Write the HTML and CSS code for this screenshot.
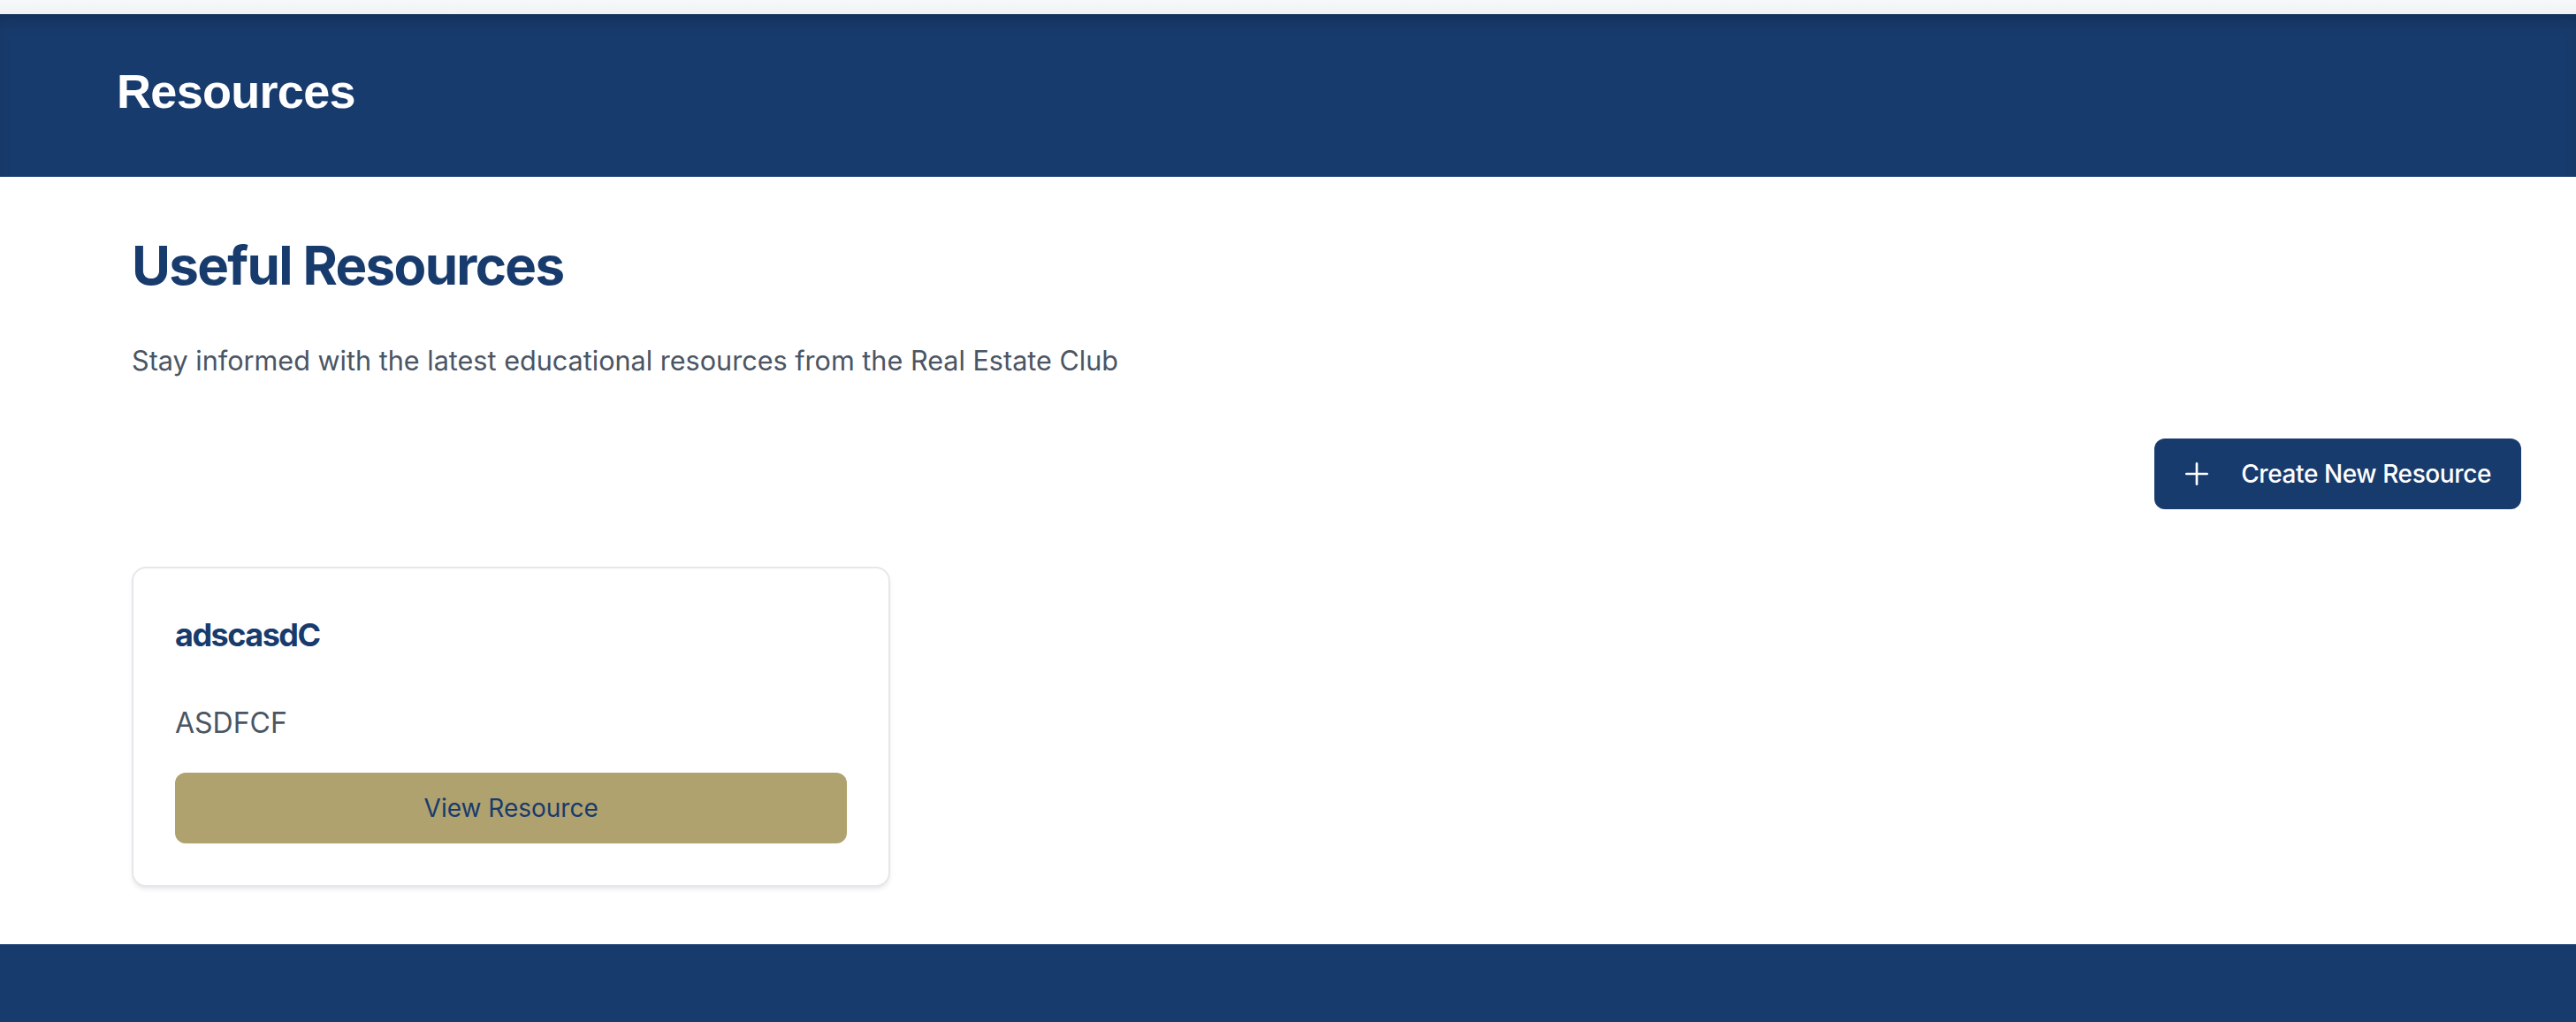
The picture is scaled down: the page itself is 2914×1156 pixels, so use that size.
FILE: index.html
```html
<!DOCTYPE html>
<html lang="en">
<head>
<meta charset="utf-8">
<title>Resources</title>
<link rel="stylesheet" href="styles.css">
</head>
<body>
  <div class="topbar"></div>
  <header class="hero">
    <h1 class="hero-title">Resources</h1>
  </header>
  <main class="main">
    <h2 class="page-title">Useful Resources</h2>
    <p class="page-sub">Stay informed with the latest educational resources from the Real Estate Club</p>
    <div class="actions">
      <button class="btn-create" type="button">
        <svg class="plus" viewBox="0 0 24 24" width="40" height="40" fill="none" stroke="currentColor" stroke-width="1.6" stroke-linecap="round"><path d="M12 5v14M5 12h14"/></svg>
        <span>Create New Resource</span>
      </button>
    </div>
    <div class="grid">
      <article class="card">
        <h3 class="card-title">adscasdC</h3>
        <p class="card-desc">ASDFCF</p>
        <button class="btn-view" type="button">View Resource</button>
      </article>
    </div>
  </main>
  <footer class="footer"></footer>
</body>
</html>
```
FILE: styles.css
```css
* { box-sizing: border-box; }
html, body { margin: 0; padding: 0; }
body {
  background: #ffffff;
  font-family: Inter, "Noto Sans", sans-serif;
  overflow: hidden;
}
.topbar {
  height: 16px;
  background: linear-gradient(#f7f8fa, #f1f2f5);
}
.hero {
  background: #183b6d;
  height: 184px;
  padding: 57px 0 0 132px;
  box-shadow: inset 0 14px 22px -14px rgba(0, 0, 0, 0.35);
}
.hero-title {
  margin: 0;
  font-family: "Liberation Sans", Arial, sans-serif;
  font-weight: 700;
  font-size: 54px;
  line-height: 60px;
  letter-spacing: -0.7px;
  color: #ffffff;
}
.main {
  padding: 64px 62px 65px 149px;
}
.page-title {
  margin: 0;
  font-size: 60px;
  line-height: 72px;
  font-weight: 700;
  letter-spacing: -1.65px;
  color: #183b6d;
}
.page-sub {
  margin: 48px 0 0;
  font-size: 30.6px;
  line-height: 48px;
  color: #4b5563;
}
.actions {
  display: flex;
  justify-content: flex-end;
  margin-top: 64px;
}
.btn-create {
  display: flex;
  align-items: center;
  gap: 30px;
  height: 80px;
  padding: 0 34px 0 28px;
  border: 0;
  border-radius: 12px;
  background: #183b6d;
  color: #ffffff;
  font-family: Inter, "Noto Sans", sans-serif;
  font-size: 28px;
  font-weight: 500;
  line-height: 40px;
  letter-spacing: -0.4px;
}
.plus { display: block; flex: none; }
.grid {
  display: grid;
  grid-template-columns: repeat(3, 1fr);
  gap: 64px;
  margin-top: 65px;
}
.card {
  border: 2px solid #e5e7eb;
  border-radius: 16px;
  background: #ffffff;
  padding: 47px;
  box-shadow: 0 4px 6px -1px rgba(0, 0, 0, 0.08), 0 2px 4px -2px rgba(0, 0, 0, 0.06);
}
.card-title {
  margin: 0;
  font-size: 36px;
  line-height: 56px;
  font-weight: 700;
  letter-spacing: -1.5px;
  color: #183b6d;
}
.card-desc {
  margin: 48px 0 0;
  font-size: 32px;
  line-height: 48px;
  color: #4b5563;
}
.btn-view {
  display: block;
  width: 100%;
  margin-top: 32px;
  height: 80px;
  border: 0;
  border-radius: 12px;
  background: #afa26e;
  color: #183b6d;
  font-family: Inter, "Noto Sans", sans-serif;
  font-size: 28px;
  line-height: 40px;
  font-weight: 400;
}
.footer {
  height: 120px;
  background: #183b6d;
}
```
